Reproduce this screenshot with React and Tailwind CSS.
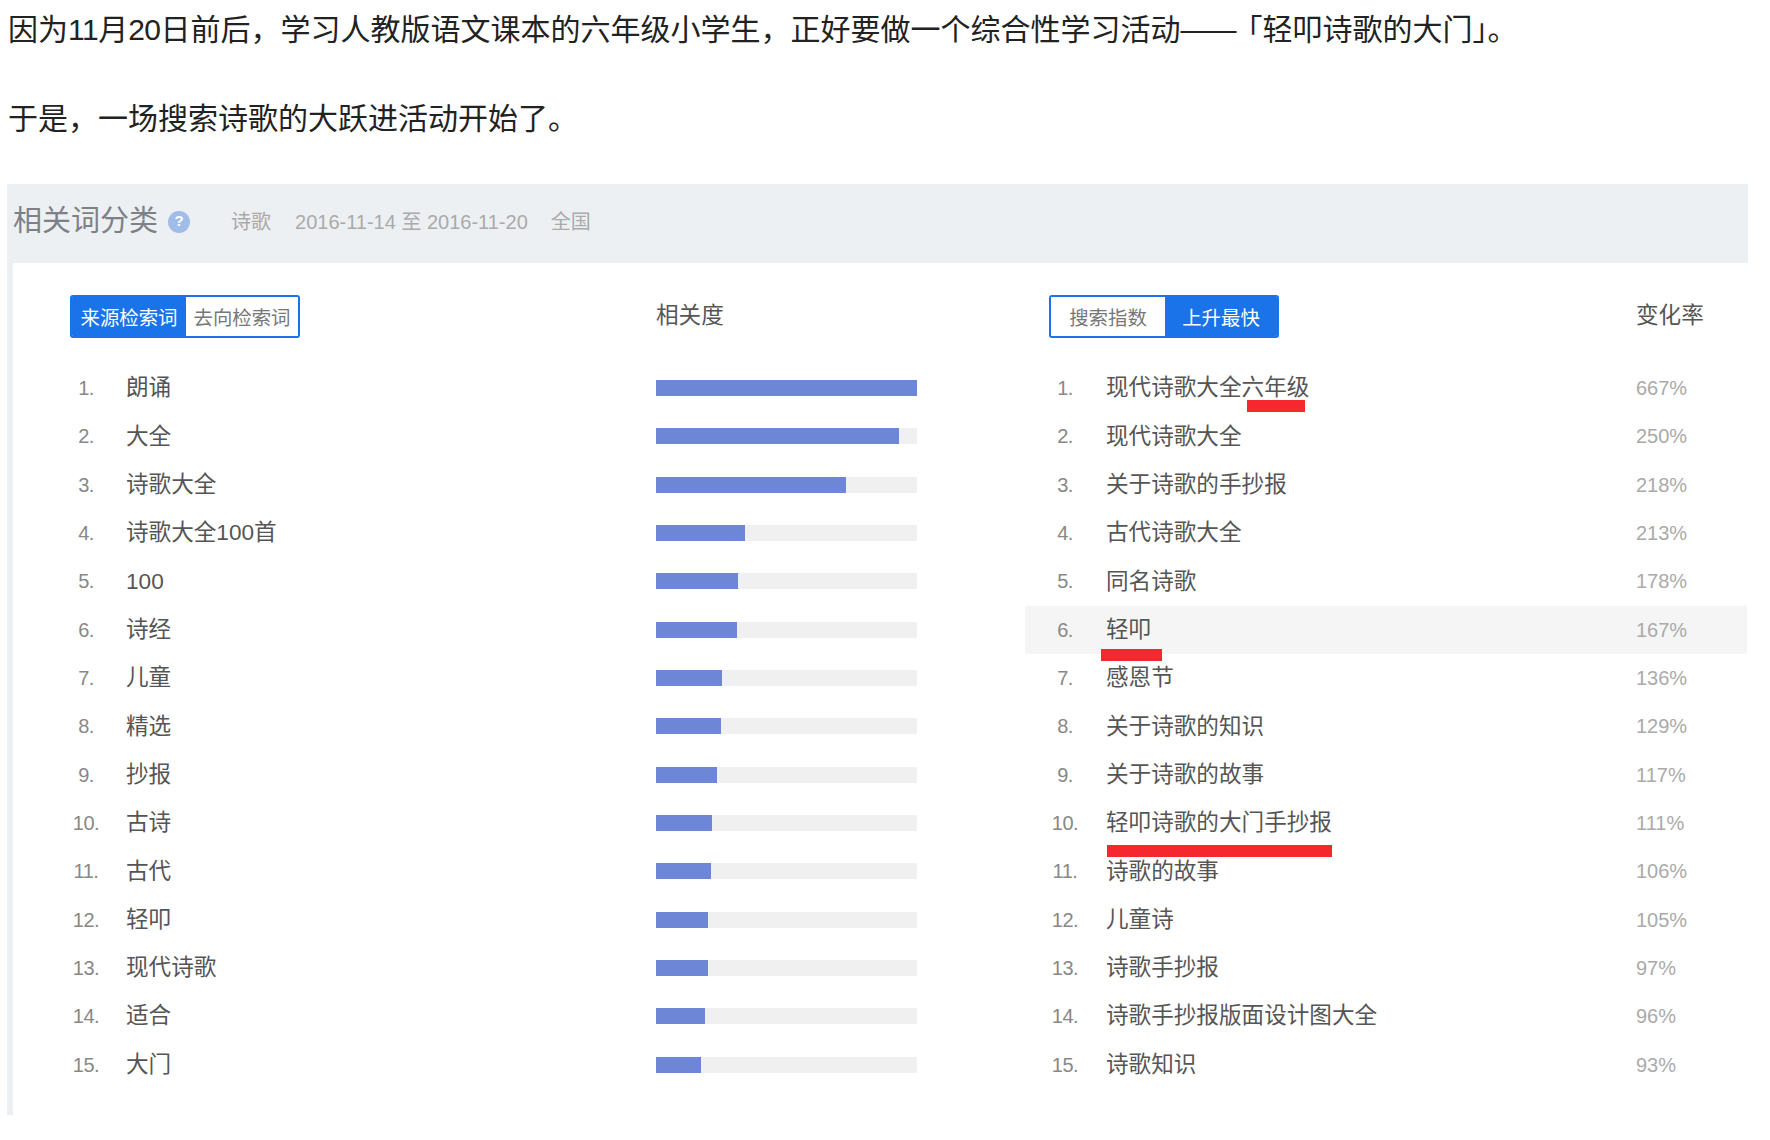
const LEFT = [
  ['朗诵', 261],
  ['大全', 243],
  ['诗歌大全', 190],
  ['诗歌大全100首', 89],
  ['100', 82],
  ['诗经', 81],
  ['儿童', 66],
  ['精选', 65],
  ['抄报', 61],
  ['古诗', 56],
  ['古代', 55],
  ['轻叩', 52],
  ['现代诗歌', 52],
  ['适合', 49],
  ['大门', 45],
];

const RIGHT = [
  ['现代诗歌大全六年级', '667%'],
  ['现代诗歌大全', '250%'],
  ['关于诗歌的手抄报', '218%'],
  ['古代诗歌大全', '213%'],
  ['同名诗歌', '178%'],
  ['轻叩', '167%'],
  ['感恩节', '136%'],
  ['关于诗歌的知识', '129%'],
  ['关于诗歌的故事', '117%'],
  ['轻叩诗歌的大门手抄报', '111%'],
  ['诗歌的故事', '106%'],
  ['儿童诗', '105%'],
  ['诗歌手抄报', '97%'],
  ['诗歌手抄报版面设计图大全', '96%'],
  ['诗歌知识', '93%'],
];

function Toggle({ left, right, active }) {
  const on = 'bg-[#1a73e8] text-white';
  const off = 'bg-white text-[#777]';
  return (
    <div className="flex h-[43px] w-[230px] overflow-hidden rounded-[3px] border-2 border-[#1a73e8] text-[19.4px] leading-[42px]">
      <div className={`w-[114px] text-center ${active === 0 ? on : off}`}>{left}</div>
      <div className={`flex-1 text-center ${active === 1 ? on : off}`}>{right}</div>
    </div>
  );
}

function Num({ n }) {
  return <span className="w-[28px] shrink-0 whitespace-nowrap text-center text-[20px] tracking-[-0.5px] text-[#888]">{n}.</span>;
}

export default function App() {
  return (
    <div className="min-h-[1140px] bg-white font-['Liberation_Sans','Noto_Sans_CJK_SC',sans-serif]">
      <div className="pl-[8px] pt-[7px] text-[30px] leading-[45px] text-[#222]">
        <p className="mb-[44px]">
          因为<span className="tracking-[-0.5px]">11</span>月<span className="tracking-[-0.5px]">20</span>日前后，学习人教版语文课本的六年级小学生，正好要做一个综合性学习活动<span className="tracking-[-4px]">——</span>「轻叩诗歌的大门」。
        </p>
        <p className="mb-[43px]">于是，一场搜索诗歌的大跃进活动开始了。</p>
      </div>

      <div className="ml-[7px] mr-[22px] flex h-[931px] flex-col bg-[#edf0f3]">
        <div className="flex h-[79px] shrink-0 items-center pb-[4px] pl-[6px] text-[20px] text-[#aaa]">
          <span className="text-[29px] text-[#7d8186]">相关词分类</span>
          <span className="ml-[10px] flex h-[22px] w-[22px] items-center justify-center rounded-full bg-[#a0bce8] text-[15px] font-bold text-white">?</span>
          <span className="ml-[41px]">诗歌</span>
          <span className="ml-[24px]">2016-11-14 至 2016-11-20</span>
          <span className="ml-[23px]">全国</span>
        </div>

        <div className="ml-[6px] flex-1 bg-white pt-[32px]">
          <div className="flex h-[43px] items-center">
            <div className="ml-[57px] w-[586px]"><Toggle left="来源检索词" right="去向检索词" active={0} /></div>
            <div className="w-[393px] pb-[2px] text-[22.6px] text-[#555]">相关度</div>
            <div className="w-[587px]"><Toggle left="搜索指数" right="上升最快" active={1} /></div>
            <div className="pb-[2px] text-[22.6px] text-[#555]">变化率</div>
          </div>

          <div className="mt-[26px] grid grid-cols-[1012px_722px]">
            <div>
              {LEFT.map(([name, width], i) => (
                <div key={name + i} className="flex h-[48.33px] items-center pl-[59px]">
                  <Num n={i + 1} />
                  <span className="ml-[26px] w-[530px] shrink-0 text-[22.6px] text-[#555]">{name}</span>
                  <div className="h-[16px] w-[261px] bg-[#f0f0f0]">
                    <div className="h-full bg-[#6d87d6]" style={{ width }} />
                  </div>
                </div>
              ))}
            </div>
            <div>
              {RIGHT.map(([name, rate], i) => (
                <div key={name} className={`relative flex h-[48.33px] items-center pl-[26px] ${i === 5 ? 'bg-[#f5f5f5]' : ''}`}>
                  <Num n={i + 1} />
                  <span className="ml-[27px] w-[530px] shrink-0 text-[22.6px] text-[#555]">{name}</span>
                  <span className="text-[20px] text-[#aaa]">{rate}</span>
                  {i === 0 && <div className="absolute left-[222px] top-[36px] h-[12px] w-[58px] bg-[#f5282f]" />}
                  {i === 5 && <div className="absolute left-[76px] top-[43px] h-[12px] w-[61px] bg-[#f5282f]" />}
                  {i === 9 && <div className="absolute left-[82px] top-[46px] h-[12px] w-[225px] bg-[#f5282f]" />}
                </div>
              ))}
            </div>
          </div>
        </div>
      </div>
    </div>
  );
}
